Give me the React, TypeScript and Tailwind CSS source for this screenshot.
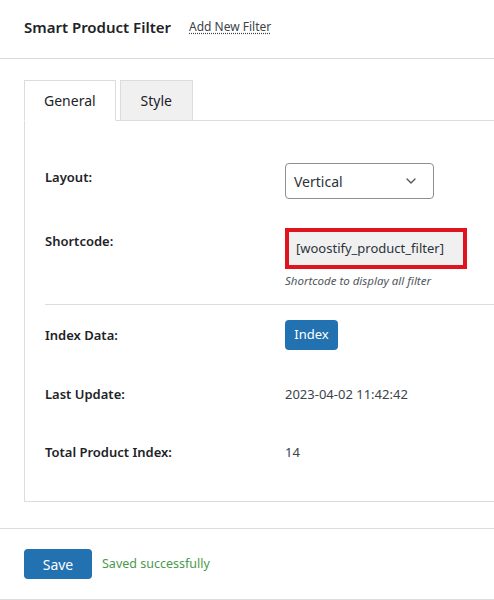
import { ChevronDown } from 'lucide-react';

const font = { fontFamily: '"Noto Sans", "Liberation Sans", sans-serif' };

function Label({ children }: { children: React.ReactNode }) {
  return <div className="text-[13px] leading-5 font-semibold text-[#1d2327]">{children}</div>;
}

export default function App() {
  return (
    <div className="min-h-[600px] w-[494px] overflow-hidden bg-white" style={font}>
      {/* page header */}
      <div className="flex h-[59px] items-center gap-[18px] border-b border-[#dcdcde] px-6 pb-1">
        <h1 className="text-[15px] font-semibold text-[#1d2327]">Smart Product Filter</h1>
        <span className="text-[12px] text-[#3c434a] underline decoration-dotted underline-offset-2">Add New Filter</span>
      </div>

      <div className="pl-6 pt-[21px]">
        {/* tabs */}
        <div className="flex h-[41px] items-end gap-1 border-b border-[#dcdcde]">
          <div className="-mb-px flex h-[41px] items-center border border-[#dcdcde] border-b-white bg-white px-[19px] text-[14px] text-[#1d2327]">
            General
          </div>
          <div className="flex h-10 items-center border border-b-0 border-[#dcdcde] bg-[#f0f0f1] px-5 text-[14px] text-[#1d2327]">
            Style
          </div>
        </div>

        {/* panel */}
        <div className="mr-[-10px] border border-t-0 border-[#dcdcde] pb-[39px] pl-5 pt-[42px]">
          <div className="grid grid-cols-[240px_1fr] items-start">
            <div className="mt-[4px]">
              <Label>Layout:</Label>
            </div>
            <div className="flex h-9 w-[149px] items-center justify-between rounded border border-[#8c8f94] pl-2 pr-[14px] text-[14px] text-[#2c3338]">
              Vertical
              <ChevronDown className="h-4 w-4 text-[#50575e]" strokeWidth={2} />
            </div>

            <div className="mt-[32px]">
              <Label>Shortcode:</Label>
            </div>
            <div className="mt-[29px]">
              <div className="flex h-[41px] w-[182px] items-center border-4 border-[#e0141e] bg-[#f0f0f1] pl-[7px] text-[13px] text-[#2c3338]">
                [woostify_product_filter]
              </div>
              <div className="mt-1 text-[11.5px] italic leading-4 text-[#50575e]">Shortcode to display all filter</div>
            </div>
          </div>

          <div className="mt-[15px] border-t border-[#dcdcde]" />

          <div className="grid grid-cols-[240px_1fr] items-start pt-[15px]">
            <div className="mt-[5px]">
              <Label>Index Data:</Label>
            </div>
            <div className="flex h-[30px] w-[53px] items-center justify-center rounded bg-[#2271b1] text-[13px] text-white">
              Index
            </div>

            <div className="mt-[34px]">
              <Label>Last Update:</Label>
            </div>
            <div className="mt-[34px] text-[13px] leading-5 text-[#3c434a]">2023-04-02 11:42:42</div>

            <div className="mt-[38px]">
              <Label>Total Product Index:</Label>
            </div>
            <div className="mt-[38px] text-[13px] leading-5 text-[#3c434a]">14</div>
          </div>
        </div>
      </div>

      {/* footer */}
      <div className="mt-[26px] border-t border-[#dcdcde] px-6 pb-5 pt-5">
        <div className="flex items-center gap-[10px]">
          <div className="flex h-[30px] w-[68px] items-center justify-center rounded bg-[#2271b1] text-[14px] text-white">
            Save
          </div>
          <span className="text-[12.5px] text-[#4a9a4a]">Saved successfully</span>
        </div>
      </div>
      <div className="border-t border-[#dcdcde]" />
    </div>
  );
}
